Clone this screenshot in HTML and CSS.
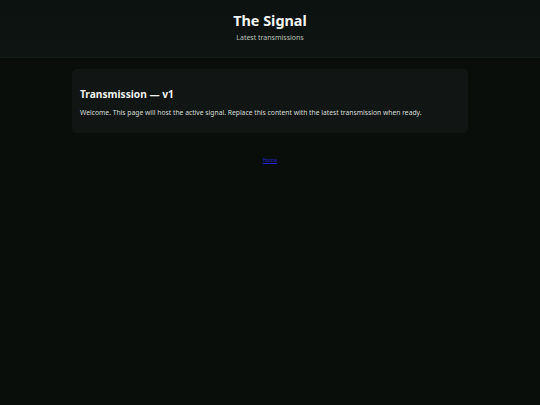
FILE: index.html
```html
<!DOCTYPE html>
<html lang="en">
<head>
<meta charset="utf-8">
<title>The Signal</title>
<link rel="stylesheet" href="styles.css">
</head>
<body>
<header class="site-header">
  <h1 class="site-title">The Signal</h1>
  <p class="site-tagline">Latest transmissions</p>
</header>
<main class="content">
  <article class="card">
    <h2 class="card-title">Transmission — v1</h2>
    <p class="card-text">Welcome. This page will host the active signal. Replace this content with the latest transmission when ready.</p>
  </article>
  <nav class="links"><a href="#" class="link">Home</a></nav>
</main>
</body>
</html>
```
FILE: styles.css
```css
html, body {
  margin: 0;
  padding: 0;
}
body {
  background: #0a0e0b;
  color: #e6ebe7;
  font-family: "Noto Sans", "Open Sans", sans-serif;
  min-height: 405px;
}
.site-header {
  height: 58px;
  box-sizing: border-box;
  padding-top: 11px;
  text-align: center;
  background: linear-gradient(180deg, #0c120f 0%, #0d1411 100%);
  border-bottom: 1px solid #101a14;
}
.site-title {
  margin: 0;
  font-size: 14.4px;
  line-height: 20px;
  font-weight: 700;
  color: #f2f5f3;
}
.site-tagline {
  margin: 2px 0 0;
  font-size: 7px;
  line-height: 10px;
  color: #b9c2bc;
}
.content {
  width: 396px;
  margin: 11px auto 0;
}
.card {
  background: #111513;
  border-radius: 5px;
  padding: 18px 8px 15px;
}
.card-title {
  margin: 0;
  font-size: 10.2px;
  line-height: 15px;
  font-weight: 700;
  color: #f0f3f1;
}
.card-text {
  margin: 6px 0 0;
  font-size: 6.75px;
  line-height: 10px;
  color: #d7ddd9;
}
.links {
  text-align: center;
  margin-top: 19px;
  line-height: 8px;
}
.link {
  font-size: 5px;
  color: #2424cc;
}
```
